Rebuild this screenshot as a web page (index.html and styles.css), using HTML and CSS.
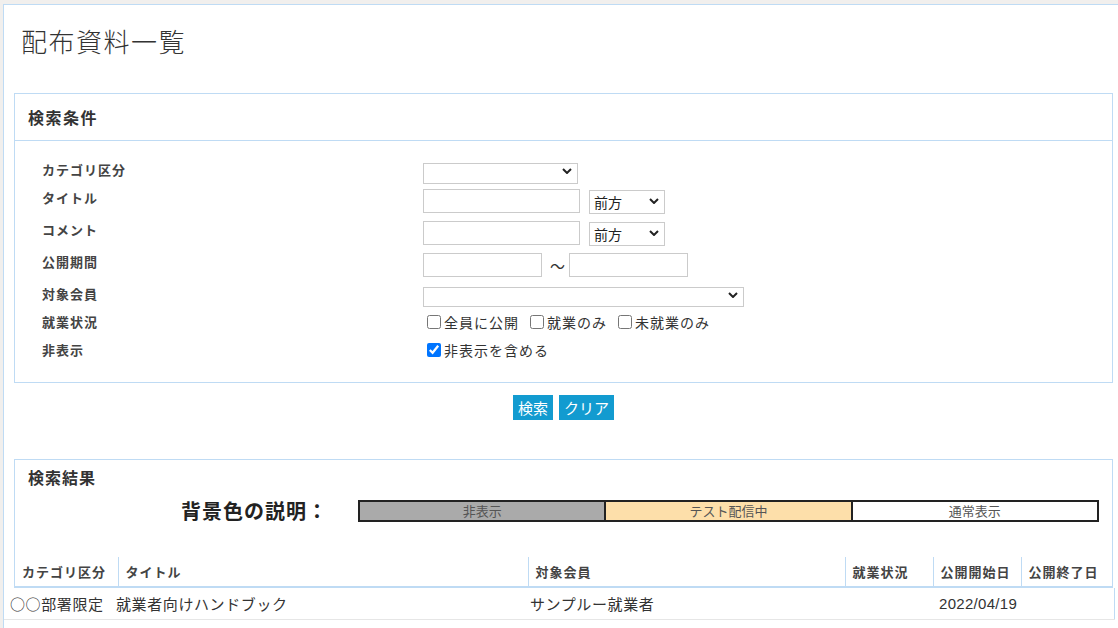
FILE: index.html
```html
<!DOCTYPE html>
<html lang="ja">
<head>
<meta charset="utf-8">
<title>配布資料一覧</title>
<link rel="stylesheet" href="styles.css">
</head>
<body>
<div class="page">
  <h1 class="page-title">配布資料一覧</h1>

  <section class="panel search-panel">
    <h2 class="panel-head">検索条件</h2>
    <div class="search-form">
      <div class="field-label">カテゴリ区分</div>
      <div class="field">
        <span class="select w-cat"><select><option></option></select><svg class="chev" width="10" height="6" viewBox="0 0 10 6"><polyline points="1,1 5,5 9,1"/></svg></span>
      </div>

      <div class="field-label">タイトル</div>
      <div class="field">
        <input class="text w-text" type="text">
        <span class="select w-mode"><select><option>前方</option></select><svg class="chev" width="10" height="6" viewBox="0 0 10 6"><polyline points="1,1 5,5 9,1"/></svg></span>
      </div>

      <div class="field-label">コメント</div>
      <div class="field">
        <input class="text w-text" type="text">
        <span class="select w-mode"><select><option>前方</option></select><svg class="chev" width="10" height="6" viewBox="0 0 10 6"><polyline points="1,1 5,5 9,1"/></svg></span>
      </div>

      <div class="field-label">公開期間</div>
      <div class="field">
        <input class="text w-date" type="text">
        <span class="tilde">～</span>
        <input class="text w-date" type="text">
      </div>

      <div class="field-label">対象会員</div>
      <div class="field">
        <span class="select w-member"><select><option></option></select><svg class="chev" width="10" height="6" viewBox="0 0 10 6"><polyline points="1,1 5,5 9,1"/></svg></span>
      </div>

      <div class="field-label">就業状況</div>
      <div class="field checks">
        <label class="check"><input type="checkbox">全員に公開</label>
        <label class="check"><input type="checkbox">就業のみ</label>
        <label class="check"><input type="checkbox">未就業のみ</label>
      </div>

      <div class="field-label">非表示</div>
      <div class="field checks">
        <label class="check"><input type="checkbox" checked>非表示を含める</label>
      </div>
    </div>
  </section>

  <div class="actions">
    <button class="btn" type="button">検索</button>
    <button class="btn" type="button">クリア</button>
  </div>

  <section class="panel result-panel">
    <h2 class="result-head">検索結果</h2>
    <div class="legend">
      <span class="legend-title">背景色の説明：</span>
      <table class="legend-table">
        <tr>
          <td class="bg-hidden">非表示</td>
          <td class="bg-test">テスト配信中</td>
          <td class="bg-normal">通常表示</td>
        </tr>
      </table>
    </div>
    <table class="grid-head">
      <colgroup>
        <col class="c1"><col class="c2"><col class="c3"><col class="c4"><col class="c5"><col>
      </colgroup>
      <tr>
        <th>カテゴリ区分</th>
        <th>タイトル</th>
        <th>対象会員</th>
        <th>就業状況</th>
        <th>公開開始日</th>
        <th>公開終了日</th>
      </tr>
    </table>
  </section>

  <table class="grid-body">
    <colgroup>
      <col class="d1"><col class="d2"><col class="d3"><col class="d4"><col class="d5"><col>
    </colgroup>
    <tr>
      <td>○○部署限定</td>
      <td>就業者向けハンドブック</td>
      <td>サンプルー就業者</td>
      <td></td>
      <td class="num">2022/04/19</td>
      <td></td>
    </tr>
  </table>
</div>
</body>
</html>
```

FILE: styles.css
```css
html, body {
  margin: 0;
  padding: 0;
  overflow: hidden;
}

body {
  background: #f1efed;
  font-family: "Noto Sans CJK JP", "Liberation Sans", sans-serif;
  color: #333;
}

.page {
  margin: 4px 0 0 3px;
  width: 1130px;
  min-height: 640px;
  background: #fff;
  border-top: 1px solid #bfdbf4;
  border-left: 1px solid #bfdbf4;
}

.page-title {
  margin: 18px 0 34px 17px;
  font-size: 26px;
  line-height: 36px;
  font-weight: 300;
  letter-spacing: 1.5px;
  color: #333;
}

/* panels */
.panel {
  box-sizing: border-box;
  width: 1099px;
  margin-left: 10px;
  border: 1px solid #bfdbf4;
  background: #fff;
}

.panel-head {
  margin: 0;
  padding: 12px 13px;
  font-size: 16px;
  line-height: 22px;
  font-weight: 700;
  letter-spacing: 1.5px;
  color: #333;
  border-bottom: 1px solid #bfdbf4;
}

/* search form */
.search-form {
  display: grid;
  grid-template-columns: 381px 1fr;
  grid-template-rows: 28px 32px 32px 32px 28px 28px 28px;
  padding: 16px 0 17px 27px;
}

.field-label {
  align-self: start;
  padding-top: 3px;
  font-size: 13px;
  line-height: 20px;
  font-weight: 700;
  letter-spacing: 1px;
  color: #444;
}

.field {
  display: flex;
  align-items: center;
}

.text {
  box-sizing: border-box;
  height: 24px;
  margin: 0;
  padding: 0 4px;
  border: 1px solid #cbcbcb;
  border-radius: 0;
  background: #fff;
  font: 14px "Noto Sans CJK JP", sans-serif;
  outline: none;
}

.w-text { width: 157px; margin-right: 9px; }
.w-date { width: 119px; }

.tilde {
  margin: 0 4px 0 8px;
  font-size: 15px;
  color: #333;
}

.select {
  position: relative;
  display: inline-block;
}

.select select {
  appearance: none;
  -webkit-appearance: none;
  box-sizing: border-box;
  width: 100%;
  height: 100%;
  margin: 0;
  padding: 0 4px;
  border: 1px solid #cbcbcb;
  border-radius: 0;
  background: #fff;
  font: 14px "Noto Sans CJK JP", sans-serif;
  color: #222;
  outline: none;
}

.chev {
  position: absolute;
  right: 6px;
  top: 50%;
  margin-top: -3px;
  pointer-events: none;
}

.chev polyline {
  fill: none;
  stroke: #222;
  stroke-width: 2;
}

.w-cat { width: 155px; height: 21px; }
.w-mode { width: 76px; height: 24px; }
.w-member { width: 321px; height: 20px; }

.checks {
  font-size: 14px;
  letter-spacing: 1px;
  color: #333;
  padding-bottom: 3px;
}

.check {
  display: inline-flex;
  align-items: center;
  margin-right: 7px;
}

.check input {
  width: 14px;
  height: 14px;
  margin: 0 3px 0 4px;
}

/* action buttons */
.actions {
  display: flex;
  justify-content: center;
  gap: 6px;
  width: 1099px;
  margin: 12px 0 39px 10px;
}

.btn {
  height: 25px;
  padding: 0 5px;
  border: 0;
  border-radius: 0;
  background: #129bd0;
  color: #fff;
  font: 15px "Noto Sans CJK JP", sans-serif;
  line-height: 25px;
}

/* results */
.result-panel {
  border-bottom: 0;
}

.result-head {
  margin: 0;
  padding: 6px 13px 0;
  font-size: 16px;
  line-height: 22px;
  font-weight: 700;
  letter-spacing: 1px;
  color: #333;
}

.legend {
  display: flex;
  align-items: center;
  margin-top: 12px;
  padding-left: 166px;
}

.legend-title {
  margin-right: 30px;
  font-size: 20px;
  line-height: 22px;
  font-weight: 700;
  letter-spacing: 1px;
  color: #222;
}

.legend-table {
  width: 741px;
  height: 22px;
  border-collapse: collapse;
  border: 2px solid #222;
  table-layout: fixed;
}

.legend-table td {
  padding: 0;
  border: 2px solid #222;
  font-size: 13px;
  line-height: 16px;
  text-align: center;
  color: #555;
}

.bg-hidden { background: #aaaaaa; }
.bg-test { background: #fddfaa; }
.bg-normal { background: #fff; }

.grid-head {
  width: 100%;
  margin-top: 35px;
  border-collapse: collapse;
  table-layout: fixed;
  border-bottom: 2px solid #bfdbf4;
}

.grid-head .c1 { width: 103px; }
.grid-head .c2 { width: 410px; }
.grid-head .c3 { width: 317px; }
.grid-head .c4 { width: 88px; }
.grid-head .c5 { width: 88px; }

.grid-head th {
  height: 29px;
  padding: 0 7px;
  border-left: 1px solid #bfdbf4;
  font-size: 13px;
  font-weight: 700;
  letter-spacing: 1px;
  color: #444;
  text-align: left;
  white-space: nowrap;
}

.grid-head th:first-child {
  border-left: 0;
}

.grid-body {
  width: 1111px;
  border-collapse: collapse;
  table-layout: fixed;
  border-right: 1px solid #bfdbf4;
}

.grid-body .d1 { width: 106px; }
.grid-body .d2 { width: 414px; }
.grid-body .d3 { width: 317px; }
.grid-body .d4 { width: 92px; }
.grid-body .d5 { width: 88px; }

.grid-body td {
  height: 31px;
  padding: 0 6px;
  border-bottom: 1px solid #e6e6e6;
  font-size: 15px;
  letter-spacing: 0.6px;
  color: #333;
  white-space: nowrap;
}

.grid-body .num {
  font-family: "Liberation Sans", sans-serif;
  letter-spacing: 0.3px;
}
```
